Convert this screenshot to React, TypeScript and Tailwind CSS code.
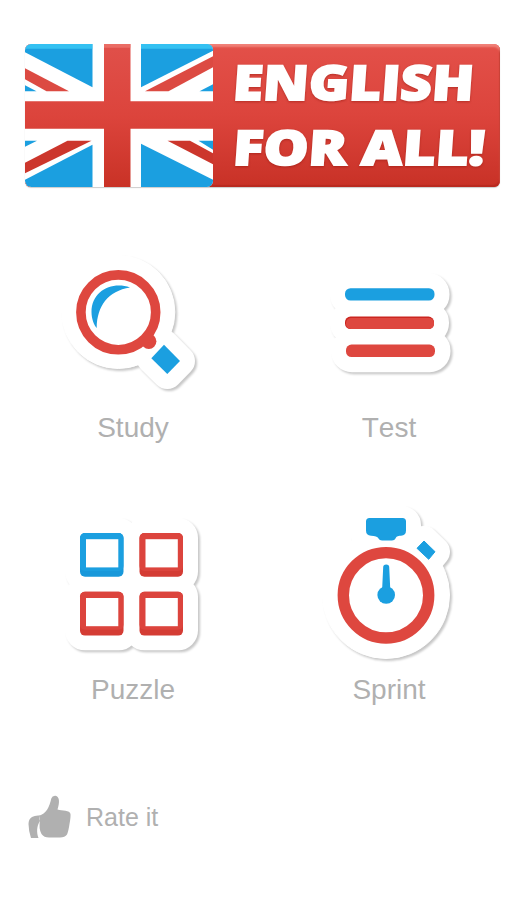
import type { ReactNode } from "react";

const BLUE = "#1b9fe0";
const RED = "#de473f";

interface MenuItemProps {
    label: string;
    viewBox: string;
    children: ReactNode;
}

// one tile of the main menu, icon on top and label under it
const MenuItem = ({ label, viewBox, children }: MenuItemProps) => (
    <button className="flex flex-col items-center">
        <svg viewBox={viewBox} className="h-[165px] w-[150px] overflow-visible">
            {children}
        </svg>
        <span className="h-[46px] text-[28px] leading-[46px] text-[#b0b0b0] [font-kerning:none]">{label}</span>
    </button>
);

// white paper outline behind an icon
const Sticker = ({ children }: { children: ReactNode }) => (
    <g
        fill="white"
        stroke="white"
        strokeLinejoin="round"
        className="drop-shadow-[2px_2px_1.2px_rgba(0,0,0,0.22)]"
    >
        {children}
    </g>
);

const Flag = () => (
    <svg viewBox="25 44.5 188 142.5" className="h-full w-[188px] shrink-0 rounded-[6px]">
        <defs>
            <linearGradient id="cross" gradientUnits="userSpaceOnUse" x1="0" y1="45" x2="0" y2="187">
                <stop offset="0" stopColor="#e0504a" />
                <stop offset="0.5" stopColor="#dc443c" />
                <stop offset="1" stopColor="#c93226" />
            </linearGradient>
        </defs>
        <rect x="25" y="44" width="188" height="144" fill="white" />
        <g fill={BLUE}>
            <path d="M25 44H92.5V87.5L25 52.5Z" />
            <path d="M141 44H213V51L141 87.5Z" />
            <path d="M25 85.5L36.5 91.5H25Z" />
            <path d="M199.5 91.5L213 84.5V91.5Z" />
            <path d="M25 141H37L25 147Z" />
            <path d="M198.5 141H213V150Z" />
            <path d="M92.5 145V188H25V180Z" />
            <path d="M141 144L213 180V188H141Z" />
        </g>
        <path d="M25 68.5L69 91.5H46.5L25 79.5Z" fill="#dc4a42" />
        <path d="M145 91.5L213 56.5V67.5L168.5 91.5Z" fill="#dc4a42" />
        <path d="M67.5 141H91.5L25 173.5V163Z" fill="#cc362c" />
        <path d="M167.5 141H190L213 153.5V164.5Z" fill="#cc362c" />
        <path d="M104 44H130.5V101.5H213V129H130.5V188H104V129H25V101.5H104Z" fill="url(#cross)" />
        <path d="M25 44H92.5V49H25ZM141 44H213V49H141Z" fill="#3fd0fa" opacity="0.7" />
        <path d="M104 44H130.5V48H104Z" fill="#f08078" opacity="0.6" />
    </svg>
);

const Banner = () => (
    <header className="flex h-[143px] w-[475px] overflow-hidden rounded-[6px] bg-linear-to-b from-[#e35049] via-[#dc443c] to-[#c83126] shadow-[inset_0_3px_2px_#f08078,inset_-1px_-2px_1px_#b92a20,0_1px_1px_#cccccc]">
        <Flag />
        <svg viewBox="213 44 287 143" className="h-full flex-1">
            <g
                fill="white"
                stroke="white"
                strokeWidth="1.8"
                fontFamily="'Open Sans', sans-serif"
                fontWeight="800"
                fontSize="48"
                className="drop-shadow-[0_1px_1px_rgba(140,20,10,0.5)]"
            >
                <text transform="translate(232 100) skewX(-4)" textLength="241" lengthAdjust="spacingAndGlyphs">ENGLISH</text>
                <text transform="translate(232 164.5) skewX(-4)" textLength="252" lengthAdjust="spacingAndGlyphs">FOR ALL!</text>
            </g>
        </svg>
    </header>
);

const squares = [
    { x: 80, y: 533, color: BLUE, base: "#1898da" },
    { x: 139.5, y: 533, color: "#dc443d", base: "#d43c34" },
    { x: 80, y: 591.8, color: "#dc443d", base: "#d43c34" },
    { x: 139.5, y: 591.8, color: "#dc443d", base: "#d43c34" },
];

const App = () => {
    return (
        <div className="flex h-[900px] w-[526px] flex-col bg-white pt-11 font-['Liberation_Sans',Arial,sans-serif]">
            <div className="pl-[25px]">
                <Banner />
            </div>

            <main className="mt-[53px] ml-[5px] grid grid-cols-[256px_256px] gap-y-[51px]">
                <MenuItem label="Study" viewBox="58 240 150 165">
                    <Sticker>
                        <circle cx="118.3" cy="312" r="56.5" />
                        <path d="M146 332L164 344.7L180 361L167.3 374L151.3 358.3Z" strokeWidth="30" />
                    </Sticker>
                    <circle cx="148.8" cy="341.3" r="7.6" fill={RED} />
                    <circle cx="118.3" cy="312.3" r="37.4" fill="white" stroke={RED} strokeWidth="9.6" />
                    <path d="M130 287.5C112 281 91.5 291 91.5 312C91.5 319 94 325 96.7 328C97 306 108 291 130 287.5Z" fill={BLUE} />
                    <path d="M164 344.7L180 361L167.3 374L151.3 358.3Z" fill={BLUE} />
                </MenuItem>

                <MenuItem label="Test" viewBox="314 240 150 165">
                    <Sticker>
                        <rect x="345" y="288" width="89.5" height="12.7" rx="6" strokeWidth="30" />
                        <rect x="345" y="316.5" width="89" height="12.7" rx="6" strokeWidth="30" />
                        <rect x="346" y="344.5" width="89.5" height="12.7" rx="6" strokeWidth="30" />
                    </Sticker>
                    <rect x="345" y="288.2" width="89.5" height="12.4" rx="5.5" fill={BLUE} />
                    <rect x="345" y="316.6" width="89" height="12.4" rx="5.5" fill="#cb2620" />
                    <rect x="346" y="318" width="88" height="11" rx="5" fill={RED} />
                    <rect x="346" y="344.6" width="89" height="12.4" rx="5.5" fill={RED} />
                </MenuItem>

                <MenuItem label="Puzzle" viewBox="58 502 150 165">
                    <Sticker>
                        {squares.map((s, i) => (
                            <rect key={i} x={s.x} y={s.y} width="43.5" height="43.5" rx="5" strokeWidth="30" />
                        ))}
                    </Sticker>
                    {squares.map((s, i) => (
                        <g key={i}>
                            <rect x={s.x} y={s.y} width="43.5" height="43.8" rx="5" fill={s.base} />
                            <rect x={s.x} y={s.y} width="43.5" height="38" rx="5" fill={s.color} />
                            <rect x={s.x + 6} y={s.y + 6.2} width="32.3" height="28.2" fill="white" />
                        </g>
                    ))}
                </MenuItem>

                <MenuItem label="Sprint" viewBox="314 502 150 165">
                    <Sticker>
                        <circle cx="386" cy="595" r="63.5" />
                        <rect x="366" y="521" width="40" height="18" rx="4" strokeWidth="30" />
                        <path d="M424 541L435 551.7L428.7 559.3L417 548.3Z" strokeWidth="30" />
                    </Sticker>
                    <circle cx="386" cy="595.3" r="42.7" fill="white" stroke={RED} strokeWidth="11.4" />
                    <g fill={BLUE}>
                        <path d="M369.5 518H402.5Q406 518 406 521.5V530.5Q406 535.5 401 535.8C397 536 396.5 536.5 395.5 538.5Q394.5 540.5 392 540.5H382Q379.5 540.5 378.5 538.5C377.5 536.5 375 536 371 535.8Q366 535.5 366 530.5V521.5Q366 518 369.5 518Z" />
                        <path d="M424 541L435 551.7L428.7 559.3L417 548.3Z" stroke={BLUE} strokeWidth="1" strokeLinejoin="round" />
                        <path d="M383.2 567Q383.2 564.4 386.2 564.4Q389.2 564.4 389.2 567L390.4 592H382Z" />
                        <circle cx="386.2" cy="595" r="8.8" />
                    </g>
                </MenuItem>
            </main>

            <button className="mt-[81px] ml-7 flex items-center gap-[15px] self-start">
                <svg viewBox="28 794 43 45" className="h-[45px] w-[43px]" fill="#b0b0b0">
                    <path d="M32 817Q28.5 819 28.5 824Q28.5 830 31 838H38.5C36.5 833 36.5 826 40 821Q38.5 816 40 815.5Q35 815 32 817Z" />
                    <path d="M39 815.7C46 814 49.5 807 51.3 798.5Q52.3 795.5 55.5 795.8C59.5 796.5 60 802 57.5 809.5C62 811 70 810 70.5 814Q70.8 817 69.5 824Q68.5 831 67 834.5Q65 837.5 60 837.5H49Q44 837.5 41.5 834Q38.5 829 40 820Z" />
                </svg>
                <span className="text-[25px] leading-9 text-[#b0b0b0]">Rate it</span>
            </button>
        </div>
    );
};

export default App;
